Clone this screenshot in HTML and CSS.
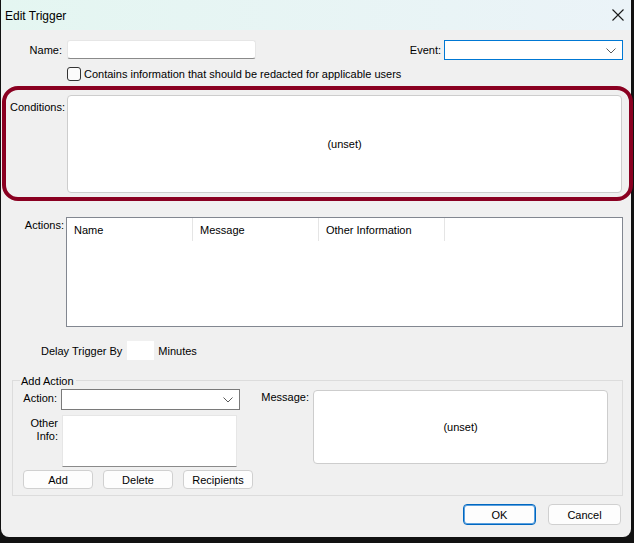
FILE: index.html
```html
<!DOCTYPE html>
<html lang="en">
<head>
    <meta charset="UTF-8">
    <title>Edit Trigger</title>
    <link rel="stylesheet" href="styles.css">
</head>
<body>
    <div class="window">
        <div class="titlebar">
            <span class="title">Edit Trigger</span>
            <svg class="close" width="12" height="12" viewBox="0 0 12 12">
                <path d="M0.5 0.5 L11.5 11.5 M11.5 0.5 L0.5 11.5" stroke="#1a1a1a" stroke-width="1.1" fill="none"/>
            </svg>
        </div>

        <div class="content">
            <div class="row-top">
                <label class="lbl lbl-name">Name:</label>
                <div class="field field-name"></div>
                <label class="lbl lbl-event">Event:</label>
                <div class="combo combo-event">
                    <svg class="chev" width="10" height="6" viewBox="0 0 10 6"><polyline points="0.5,0.5 5,5 9.5,0.5" fill="none" stroke="#5a5a5a" stroke-width="1"/></svg>
                </div>
            </div>

            <div class="row-check">
                <span class="checkbox"></span>
                <span>Contains information that should be redacted for applicable users</span>
            </div>

            <div class="row-conditions">
                <label class="lbl lbl-cond">Conditions:</label>
                <div class="unset-box cond-box">(unset)</div>
            </div>

            <div class="row-actions">
                <label class="lbl lbl-actions">Actions:</label>
                <div class="listview">
                    <div class="list-head">
                        <div class="col">Name</div>
                        <div class="col">Message</div>
                        <div class="col">Other Information</div>
                    </div>
                </div>
            </div>

            <div class="row-delay">
                <span>Delay Trigger By</span>
                <div class="field-small"></div>
                <span>Minutes</span>
            </div>

            <div class="group">
                <span class="group-title">Add Action</span>
                <div class="group-body">
                    <div class="group-left">
                        <div class="row-action">
                            <label class="lbl lbl-action">Action:</label>
                            <div class="combo combo-action">
                                <svg class="chev" width="10" height="6" viewBox="0 0 10 6"><polyline points="0.5,0.5 5,5 9.5,0.5" fill="none" stroke="#5a5a5a" stroke-width="1"/></svg>
                            </div>
                        </div>
                        <div class="row-info">
                            <label class="lbl lbl-info">Other<br>Info:</label>
                            <div class="field field-info"></div>
                        </div>
                        <div class="row-buttons">
                            <button class="btn btn-small">Add</button>
                            <button class="btn btn-small">Delete</button>
                            <button class="btn btn-small">Recipients</button>
                        </div>
                    </div>
                    <div class="group-right">
                        <label class="lbl lbl-msg">Message:</label>
                        <div class="unset-box msg-box">(unset)</div>
                    </div>
                </div>
            </div>

            <div class="footer">
                <button class="btn btn-ok">OK</button>
                <button class="btn btn-cancel">Cancel</button>
            </div>
        </div>

        <div class="highlight"></div>
    </div>
</body>
</html>
```

FILE: styles.css
```css
body {
    margin: 0;
    background-color: #111;
    font-family: "Liberation Sans", Arial, sans-serif;
    font-size: 11px;
    color: #000;
}
.window {
    position: relative;
    width: 630px;
    height: 537px;
    margin-left: 1px;
    background-color: #f0f0f0;
    border-radius: 0 0 8px 8px;
}
.titlebar {
    height: 30px;
    display: flex;
    align-items: center;
    justify-content: space-between;
    padding: 0 7px 0 4px;
    background: linear-gradient(90deg, #e4f6f1, #ebf3f8);
}
.title {
    font-size: 12px;
    padding-top: 2px;
}
.content {
    padding: 10px 8px 0 0;
}
.lbl {
    display: block;
}
.row-top {
    display: flex;
    align-items: center;
    height: 20px;
}
.lbl-name {
    width: 61px;
    text-align: right;
    padding-right: 5px;
}
.field {
    background-color: #fff;
    border: 1px solid #e6e6e6;
    border-bottom-color: #8a8a8a;
    border-radius: 3px;
    box-sizing: border-box;
}
.field-name {
    width: 189px;
    height: 19px;
    margin-top: -1px;
}
.lbl-event {
    margin-left: auto;
    padding-right: 3px;
}
.combo {
    position: relative;
    background-color: #fff;
    border: 1px solid #7a7a7a;
    box-sizing: border-box;
}
.combo-event {
    width: 179px;
    height: 20px;
    border-color: #0078d4;
}
.chev {
    position: absolute;
    right: 6px;
    top: 7px;
}
.row-check {
    display: flex;
    align-items: center;
    gap: 3px;
    margin-top: 7px;
    padding-left: 66px;
    height: 14px;
}
.checkbox {
    width: 12px;
    height: 12px;
    border: 1px solid #333;
    border-radius: 3px;
    background-color: #fbfbfb;
}
.row-conditions {
    display: flex;
    margin-top: 14px;
}
.lbl-cond {
    width: 57px;
    padding: 6px 0 0 9px;
}
.unset-box {
    display: flex;
    align-items: center;
    justify-content: center;
    background-color: #fff;
    border: 1px solid #cdcdcd;
    border-radius: 4px;
    box-sizing: border-box;
}
.cond-box {
    flex: 1;
    height: 98px;
    margin-right: 1px;
}
.row-actions {
    display: flex;
    margin-top: 24px;
}
.lbl-actions {
    width: 63px;
    text-align: right;
    padding: 2px 2px 0 0;
}
.listview {
    flex: 1;
    height: 110px;
    background-color: #fff;
    border: 1px solid #828790;
    box-sizing: border-box;
}
.list-head {
    display: flex;
    height: 23px;
}
.col {
    width: 118px;
    padding: 6px 0 0 7px;
    border-right: 1px solid #e5e5e5;
}
.row-delay {
    display: flex;
    align-items: center;
    height: 19px;
    margin-top: 14px;
    padding-left: 40px;
}
.field-small {
    width: 27px;
    height: 19px;
    margin: 0 4px 0 5px;
    background-color: #fff;
}
.group {
    margin: 20px 0 0 11px;
    border: 1px solid #dcdcdc;
    padding-bottom: 6px;
}
.group-title {
    display: block;
    width: fit-content;
    margin: -7px 0 0 7px;
    padding: 0 2px 0 1px;
    line-height: 14px;
    background-color: #f0f0f0;
}
.group-body {
    display: flex;
    margin-top: 1px;
}
.group-left {
    width: 245px;
}
.row-action {
    display: flex;
    align-items: center;
}
.lbl-action {
    width: 44px;
    text-align: right;
    padding-right: 4px;
    margin-top: -4px;
}
.combo-action {
    width: 179px;
    height: 21px;
}
.row-info {
    display: flex;
    margin-top: 5px;
}
.lbl-info {
    width: 45px;
    text-align: right;
    padding-right: 4px;
    line-height: 13px;
    padding-top: 2px;
}
.field-info {
    width: 175px;
    height: 52px;
    border-radius: 0;
}
.row-buttons {
    display: flex;
    gap: 10px;
    margin: 3px 0 0 10px;
}
.btn {
    font-family: inherit;
    font-size: 11px;
    background-color: #fdfdfd;
    border: 1px solid #d0d0d0;
    border-radius: 4px;
    padding: 0;
    color: #000;
}
.btn-small {
    width: 70px;
    height: 19px;
}
.group-right {
    display: flex;
    flex: 1;
    padding-left: 2px;
}
.lbl-msg {
    width: 49px;
    text-align: right;
    padding-right: 4px;
    padding-top: 2px;
}
.msg-box {
    width: 295px;
    height: 74px;
    margin-top: 1px;
}
.footer {
    display: flex;
    justify-content: flex-end;
    gap: 12px;
    margin-top: 8px;
    padding-right: 2px;
}
.btn-ok,
.btn-cancel {
    width: 73px;
    height: 21px;
}
.btn-ok {
    border: 1px solid #0067c0;
    box-shadow: inset 0 0 0 1px #5aa0df;
}
.highlight {
    position: absolute;
    left: 1px;
    top: 86px;
    width: 623px;
    height: 107px;
    border: 4px solid #8a0021;
    border-radius: 16px;
    pointer-events: none;
}
```
